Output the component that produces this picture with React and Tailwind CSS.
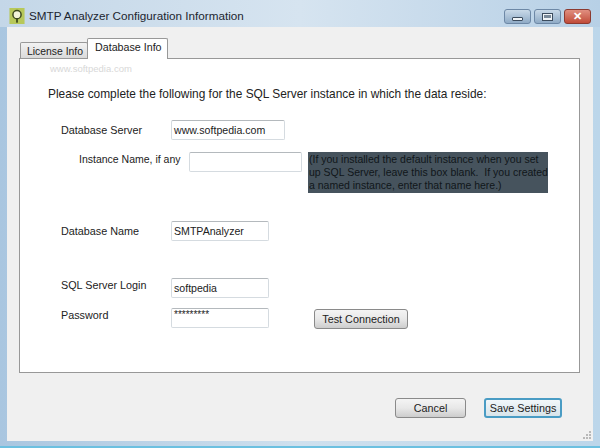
const font = { fontFamily: '"Liberation Sans", Arial, sans-serif' };

function Field({ className = "", children }) {
  return (
    <div className={`h-5 shrink-0 bg-white border border-[#d5dbe0] border-t-[#b4b9bd] rounded-[2px] leading-[18px] pl-[2px] text-[#222] whitespace-nowrap ${className}`}>
      {children}
    </div>
  );
}

function Btn({ className = "", children }) {
  return (
    <div className={`h-5 shrink-0 flex items-center justify-center rounded-[3px] text-[#222] whitespace-nowrap ${className}`}>
      {children}
    </div>
  );
}

const greyBtn = "border border-[#8a8a8a] bg-gradient-to-b from-[#f4f4f4] via-[#e8e8e8] to-[#cdcdcd]";

function WinBtn({ className = "", children }) {
  return (
    <div className={`h-[15px] flex items-center justify-center rounded-[3px] border ${className}`}>
      {children}
    </div>
  );
}

export default function App() {
  return (
    <div style={font} className="w-[600px] h-[448px] overflow-hidden flex flex-col bg-gradient-to-r from-[#a9c6e0] via-[#cfe0ee] to-[#bcd6ea] border-b-2 border-[#6cc0e0]">
      <div className="h-[27px] shrink-0 flex items-center pl-[9px] pr-[9px] pt-[4px] bg-gradient-to-r from-[#c4d7e8] via-[#d6e4f0] to-[#b7d0e6]">
        <svg width="16" height="16" viewBox="0 0 17 18" className="shrink-0">
          <rect x="0" y="0" width="17" height="18" fill="#b7c85a" />
          <circle cx="8.5" cy="7.5" r="4.6" fill="#f2f4d8" stroke="#3d4a1e" strokeWidth="1.7" />
          <rect x="7.5" y="12" width="2" height="4.5" fill="#3d4a1e" />
        </svg>
        <span className="ml-[4px] text-[11.7px] text-[#1c2530] whitespace-nowrap">SMTP Analyzer Configuration Information</span>
        <div className="ml-auto flex gap-[3px] mt-[2px]">
          <WinBtn className="w-[27px] border-[#6d88a6] bg-gradient-to-b from-[#c9d9e8] to-[#8fabc6]">
            <div className="w-[11px] h-[4px] mt-[5px] bg-[#f0f4f7] border border-[#3c4c5e] rounded-[1px]" />
          </WinBtn>
          <WinBtn className="w-[27px] border-[#6d88a6] bg-gradient-to-b from-[#c9d9e8] to-[#8fabc6]">
            <div className="w-[11px] h-[8px] border border-[#3c4c5e] bg-[#f0f4f7] flex items-center justify-center">
              <div className="w-[7px] h-[3px] bg-[#7a8a9a]" />
            </div>
          </WinBtn>
          <WinBtn className="w-[27px] border-[#8c3a30] bg-gradient-to-b from-[#e08f80] to-[#c04a38]">
            <span className="text-[11px] font-bold text-white leading-none">✕</span>
          </WinBtn>
        </div>
      </div>

      <div className="flex-1 mx-[7px] mb-[5px] bg-[#f0f0f0] px-[12px] pt-[11px] flex flex-col min-h-0 relative">
        <div className="h-[20px] flex items-end pl-[1px] shrink-0">
          <div className="h-[17px] w-[68px] mb-[-1px] border border-[#989898] border-b-0 rounded-t-[2px] bg-gradient-to-b from-[#f2f2f2] to-[#d8d8d8] text-[10.4px] leading-[17px] pl-[6px] text-[#222] whitespace-nowrap">License Info</div>
          <div className="h-[21px] w-[81px] ml-[-1px] mb-[-1px] z-10 border border-[#989898] border-b-0 rounded-t-[2px] bg-white text-[10.7px] leading-[17px] pl-[7px] text-[#222] whitespace-nowrap">Database Info</div>
        </div>
        <div className="h-[315px] w-[561px] shrink-0 bg-white border border-[#989898] pl-[28px]">
          <div className="h-[14px] pl-[2px] mt-[3px] text-[9.5px] leading-[14px] text-[#d8d8d8] whitespace-nowrap">www.softpedia.com</div>
          <div className="mt-[10px] text-[11.9px] leading-[16px] text-[#222] whitespace-nowrap">Please complete the following for the SQL Server instance in which the data reside:</div>

          <div className="flex items-center mt-[18px] ml-[13px] text-[10.8px]">
            <span className="w-[110px] text-[#222] whitespace-nowrap">Database Server</span>
            <Field className="w-[114px] text-[10.6px]">www.softpedia.com</Field>
          </div>

          <div className="flex items-start mt-[12px] ml-[31px] text-[10.5px]">
            <span className="w-[110px] leading-[14px] text-[#222] whitespace-nowrap">Instance Name, if any</span>
            <Field className="w-[113px]" />
            <div className="ml-[6px] w-[240px] h-[41px] bg-[#46535d] text-[10.5px] leading-[13px] text-[#10161a] pl-[1px] pt-[1px] whitespace-pre">{"(If you installed the default instance when you set\nup SQL Server, leave this box blank.  If you created\na named instance, enter that name here.)"}</div>
          </div>

          <div className="flex items-center mt-[28px] ml-[13px] text-[10.8px]">
            <span className="w-[110px] text-[#222] whitespace-nowrap">Database Name</span>
            <Field className="w-[98px] text-[10.6px]">SMTPAnalyzer</Field>
          </div>

          <div className="flex items-start mt-[37px] ml-[13px] text-[10.8px]">
            <span className="w-[110px] leading-[14px] text-[#222] whitespace-nowrap">SQL Server Login</span>
            <Field className="w-[98px] text-[10.6px]">softpedia</Field>
          </div>

          <div className="flex items-start mt-[10px] ml-[13px] text-[10.8px]">
            <span className="w-[110px] leading-[14px] text-[#222] whitespace-nowrap">Password</span>
            <Field className="w-[98px] text-[10px] !leading-[12px]">*********</Field>
            <Btn className={`ml-[45px] mt-[1px] w-[94px] text-[10.8px] ${greyBtn}`}>Test Connection</Btn>
          </div>
        </div>
        <div className="flex shrink-0 mt-[25px] pl-[376px]">
          <Btn className={`w-[71px] text-[10.8px] ${greyBtn}`}>Cancel</Btn>
          <Btn className="ml-[18px] w-[78px] text-[10.8px] border-2 border-[#4a9cc4] bg-gradient-to-b from-[#f2f7fa] to-[#d8e4ea]">Save Settings</Btn>
        </div>
        <svg width="9" height="9" viewBox="0 0 9 9" className="absolute right-[1px] bottom-[1px]">
          <rect x="6" y="0" width="2" height="2" fill="#b8b8b8" />
          <rect x="3" y="3" width="2" height="2" fill="#b8b8b8" />
          <rect x="6" y="3" width="2" height="2" fill="#b8b8b8" />
          <rect x="0" y="6" width="2" height="2" fill="#b8b8b8" />
          <rect x="3" y="6" width="2" height="2" fill="#b8b8b8" />
          <rect x="6" y="6" width="2" height="2" fill="#b8b8b8" />
        </svg>
      </div>
    </div>
  );
}
